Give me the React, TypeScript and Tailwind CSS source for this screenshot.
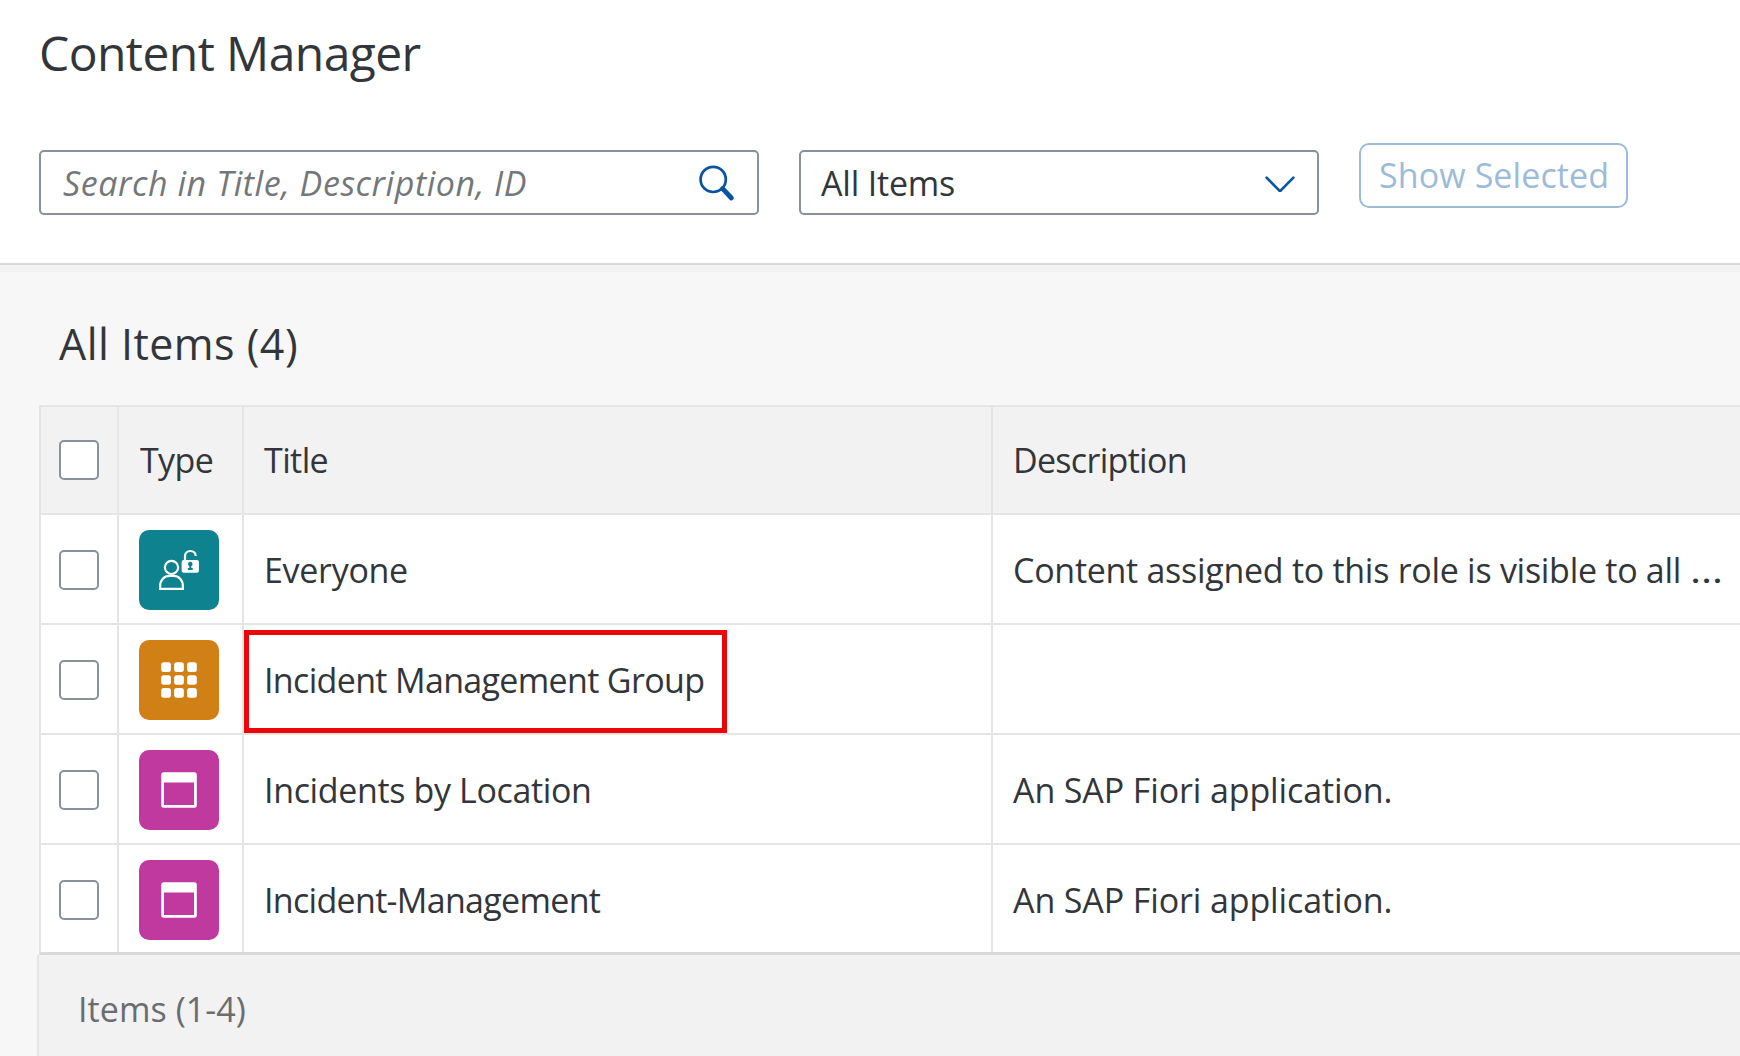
import type { ReactNode } from "react";

const COLUMNS = "grid grid-cols-[78px_125px_749px_1fr]";

function Checkbox() {
  return <span className="block size-10 rounded-[5px] border-2 border-[#89919a] bg-white" />;
}

function RoleIcon() {
  return (
    <svg viewBox="0 0 80 80" className="size-20" fill="none" stroke="#fff" strokeWidth="2.2">
      <circle cx="32.5" cy="37.4" r="6.6" />
      <path d="M21.1 58.9v-2.4c0-6.6 4-10.6 9.6-10.6h3.6c5.6 0 9.6 4 9.6 10.6v2.4z" />
      <path d="M46 31v-4.6c0-3.2 2.3-5.4 5.3-5.4s5.4 2 5.4 4.9" />
      <rect x="42.6" y="30" width="17.3" height="12.7" rx="2" fill="#fff" stroke="none" />
      <g fill="#0f828f" stroke="none">
        <circle cx="51.3" cy="34" r="2.3" />
        <path d="M50.3 35h2v3h1.4v2h-4.8v-2h1.4z" />
      </g>
    </svg>
  );
}

function GroupIcon() {
  const steps = [22.2, 35.15, 48.1];
  return (
    <svg viewBox="0 0 80 80" className="size-20" fill="#fff">
      {steps.map((y) =>
        steps.map((x) => <rect key={`${x}-${y}`} x={x} y={y} width="9.7" height="9.7" rx="2.5" />),
      )}
    </svg>
  );
}

function AppIcon() {
  return (
    <svg viewBox="0 0 80 80" className="size-20" fill="#fff">
      <path
        fillRule="evenodd"
        d="M24.7 22.2h30.6a2.5 2.5 0 0 1 2.5 2.5v30.6a2.5 2.5 0 0 1-2.5 2.5H24.7a2.5 2.5 0 0 1-2.5-2.5V24.7a2.5 2.5 0 0 1 2.5-2.5zM25 32.6V55h30V32.6z"
      />
    </svg>
  );
}

type Row = {
  tile: string;
  icon: ReactNode;
  title: string;
  titleClass: string;
  description: ReactNode;
  descriptionClass: string;
  marked?: boolean;
};

const rows: Row[] = [
  {
    tile: "bg-[#0f828f]",
    icon: <RoleIcon />,
    title: "Everyone",
    titleClass: "tracking-[-0.3px]",
    description: (
      <>
        Content assigned to this role is visible to all{" "}
        <span className="inline-block origin-left scale-x-125">…</span>
      </>
    ),
    descriptionClass: "pl-[20px] tracking-[-0.28px]",
  },
  {
    tile: "bg-[#d08014]",
    icon: <GroupIcon />,
    title: "Incident Management Group",
    titleClass: "tracking-[-0.66px]",
    description: "",
    descriptionClass: "pl-[20px]",
    marked: true,
  },
  {
    tile: "bg-[#c0399f]",
    icon: <AppIcon />,
    title: "Incidents by Location",
    titleClass: "tracking-[-0.36px]",
    description: "An SAP Fiori application.",
    descriptionClass: "pl-[20px] tracking-[-0.12px]",
  },
  {
    tile: "bg-[#c0399f]",
    icon: <AppIcon />,
    title: "Incident-Management",
    titleClass: "tracking-[-0.69px]",
    description: "An SAP Fiori application.",
    descriptionClass: "pl-[20px] tracking-[-0.12px]",
  },
];

export default function App() {
  return (
    <div className="flex h-[1056px] w-[1740px] flex-col overflow-hidden bg-[#f7f7f7] font-['Open_Sans',sans-serif] text-[34px] leading-[48px] whitespace-nowrap text-[#32363a]">
      <header className="h-[265px] shrink-0 border-b-2 border-[#d9d9d9] bg-white pl-[39px]">
        <h1 className="pt-[21px] text-[48px] leading-[64px] tracking-[-0.57px]">Content Manager</h1>
        <div className="mt-[58px] flex items-start gap-10">
          <div className="mt-[7px] flex h-[65px] w-[720px] items-center justify-between rounded-[5px] border-2 border-[#89919a] pr-[20px] pl-[22px]">
            <span className="pt-px tracking-[0.56px] text-[#74777a] italic">
              Search in Title, Description, ID
            </span>
            <svg viewBox="0 0 40 40" className="size-10" fill="none" stroke="#0854a0">
              <circle cx="16.2" cy="16.4" r="12.6" strokeWidth="2.7" />
              <path d="M25.6 25.6 34.4 35" strokeWidth="4.8" strokeLinecap="round" />
            </svg>
          </div>
          <div className="mt-[7px] flex h-[65px] w-[520px] items-center justify-between rounded-[5px] border-2 border-[#89919a] pr-[17px] pl-[20px]">
            <span className="pt-px tracking-[-0.2px]">All Items</span>
            <svg viewBox="0 0 40 40" className="size-10" fill="none" stroke="#0854a0" strokeWidth="2.6">
              <path
                d="M6.6 14.6 18.9 27.2q1.1 1 2.2 0L33.4 14.6"
                strokeLinecap="round"
                strokeLinejoin="round"
              />
            </svg>
          </div>
          <button className="flex h-[65px] w-[269px] items-center rounded-[10px] border-2 border-[#9cbbd9] pb-px pl-[18px] tracking-[0.1px] text-[#9cbbd9]">
            Show Selected
          </button>
        </div>
      </header>
      <div className="h-[7px] shrink-0 bg-[#f2f2f2]" />

      <main>
        <h2 className="h-[133px] pt-[42px] pl-[59px] text-[43px] leading-[60px] tracking-[0.47px]">
          All Items (4)
        </h2>

        <div className="ml-[39px] border-t-2 border-b-3 border-l-2 border-t-[#e5e5e5] border-b-[#d9d9d9] border-l-[#e5e5e5]">
          <div className={`${COLUMNS} h-[108px] border-b-2 border-[#e5e5e5] bg-[#f2f2f2]`}>
            <div className="border-r-2 border-[#e5e5e5] pt-[33px] pl-[18px]">
              <Checkbox />
            </div>
            <div className="border-r-2 border-[#e5e5e5] pt-[29px] pl-[21px] tracking-[-0.63px]">Type</div>
            <div className="border-r-2 border-[#e5e5e5] pt-[29px] pl-[20px] tracking-[-0.6px]">Title</div>
            <div className="pt-[29px] pl-[20px] tracking-[-0.7px]">Description</div>
          </div>
          {rows.map((row) => (
            <div
              key={row.title}
              className={`${COLUMNS} h-[110px] border-b-2 border-[#e5e5e5] bg-white last:h-[107px] last:border-b-0`}
            >
              <div className="border-r-2 border-[#e5e5e5] pt-[35px] pl-[18px]">
                <Checkbox />
              </div>
              <div className="border-r-2 border-[#e5e5e5] pt-[15px] pl-[20px]">
                <div className={`size-20 rounded-[10px] ${row.tile}`}>{row.icon}</div>
              </div>
              <div className={`relative border-r-2 border-[#e5e5e5] pt-[31px] pl-[20px] ${row.titleClass}`}>
                {row.title}
                {row.marked && (
                  <span className="absolute top-[5px] left-0 h-[103px] w-[483px] border-5 border-[#e90707]" />
                )}
              </div>
              <div className={`pt-[31px] ${row.descriptionClass}`}>{row.description}</div>
            </div>
          ))}
        </div>

        <footer className="ml-[37px] h-[101px] border-l-2 border-[#e5e5e5] bg-[#f2f2f2] pt-[30px] pl-[39px] tracking-[0.08px] text-[#6a6d70]">
          Items (1-4)
        </footer>
      </main>
    </div>
  );
}
